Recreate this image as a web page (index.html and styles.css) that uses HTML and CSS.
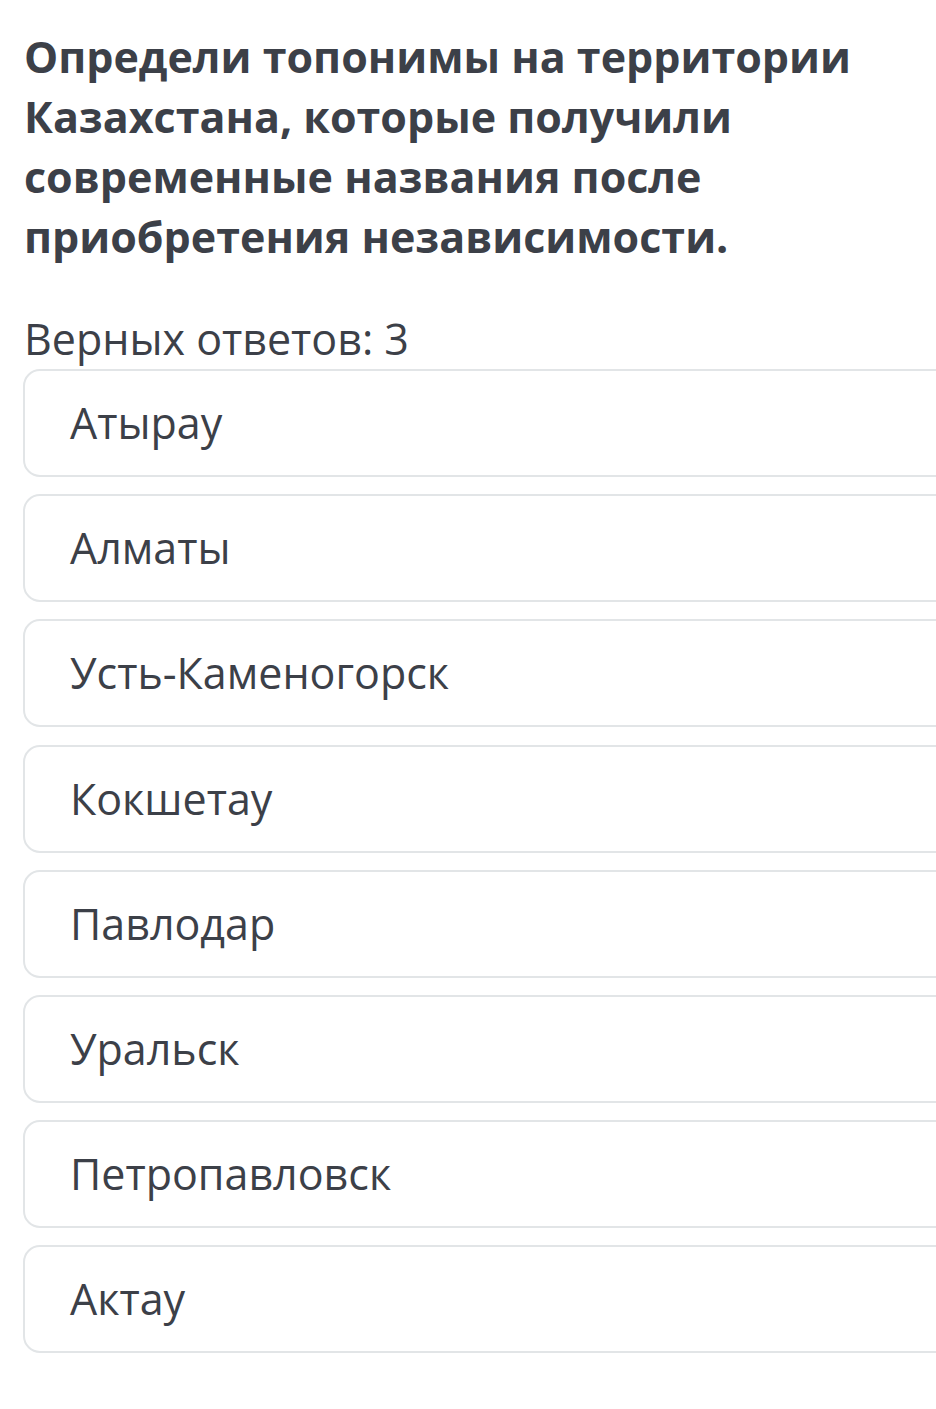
FILE: index.html
```html
<!doctype html>
<html>
<head>
  <meta charset="utf-8">
  <title>Тест</title>
  <link rel="stylesheet" href="styles.css">
</head>
<body>
  <article class="quiz">
    <h1 class="question">Определи топонимы на территории Казахстана, которые получили современные названия после приобретения независимости.</h1>

    <p class="hint">Верных ответов: 3</p>

    <ul class="options">
      <li class="option">Атырау</li>
      <li class="option">Алматы</li>
      <li class="option">Усть-Каменогорск</li>
      <li class="option">Кокшетау</li>
      <li class="option">Павлодар</li>
      <li class="option">Уральск</li>
      <li class="option">Петропавловск</li>
      <li class="option">Актау</li>
    </ul>
  </article>
</body>
</html>
```

FILE: styles.css
```css
body {
  background: white;
  color: #3c4048;
  font-family: 'Open Sans', 'Noto Sans', sans-serif;
  margin: 0;
  overflow-x: hidden;
}

.quiz {
  padding: 27px 0 0 24px;
}

.question {
  font-size: 43px;
  font-weight: bold;
  line-height: 60px;
  margin: 0 0 43px;
}

.hint {
  font-size: 43px;
  line-height: 58px;
  margin: 0 0 1px;
}

.options {
  display: flex;
  flex-direction: column;
  gap: 17.2px;
  list-style: none;
  margin: 0 0 0 -1px;
  padding: 0;
  width: 1000px;
}

.option {
  border: 2px solid #e2e5e7;
  border-radius: 17px;
  font-size: 43px;
  line-height: 58px;
  padding: 23px 45px;
}
```
